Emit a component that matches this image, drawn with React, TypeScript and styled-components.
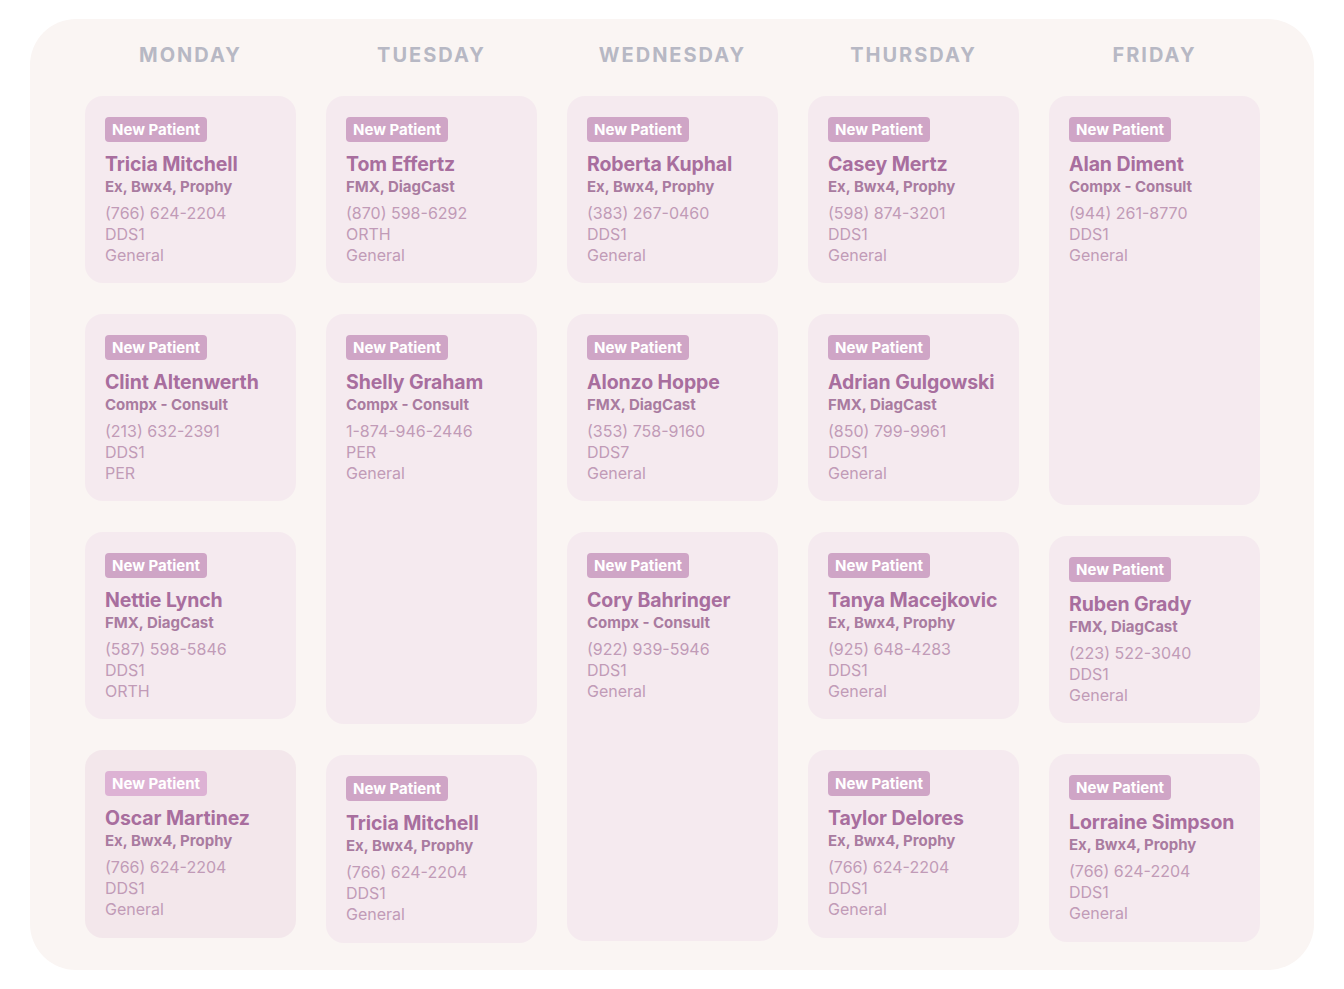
// -- basic library --
import React from 'react';
import styled, { createGlobalStyle } from 'styled-components';

// -- data --
type Appt = {
  name: string;
  proc: string;
  phone: string;
  provider: string;
  kind: string;
  height: number;
  faded?: boolean;
};

type Day = { label: string; appts: Appt[] };

const days: Day[] = [
  {
    label: 'MONDAY',
    appts: [
      { name: 'Tricia Mitchell', proc: 'Ex, Bwx4, Prophy', phone: '(766) 624-2204', provider: 'DDS1', kind: 'General', height: 187 },
      { name: 'Clint Altenwerth', proc: 'Compx - Consult', phone: '(213) 632-2391', provider: 'DDS1', kind: 'PER', height: 187 },
      { name: 'Nettie Lynch', proc: 'FMX, DiagCast', phone: '(587) 598-5846', provider: 'DDS1', kind: 'ORTH', height: 187 },
      { name: 'Oscar Martinez', proc: 'Ex, Bwx4, Prophy', phone: '(766) 624-2204', provider: 'DDS1', kind: 'General', height: 188, faded: true },
    ],
  },
  {
    label: 'TUESDAY',
    appts: [
      { name: 'Tom Effertz', proc: 'FMX, DiagCast', phone: '(870) 598-6292', provider: 'ORTH', kind: 'General', height: 187 },
      { name: 'Shelly Graham', proc: 'Compx - Consult', phone: '1-874-946-2446', provider: 'PER', kind: 'General', height: 410 },
      { name: 'Tricia Mitchell', proc: 'Ex, Bwx4, Prophy', phone: '(766) 624-2204', provider: 'DDS1', kind: 'General', height: 188 },
    ],
  },
  {
    label: 'WEDNESDAY',
    appts: [
      { name: 'Roberta Kuphal', proc: 'Ex, Bwx4, Prophy', phone: '(383) 267-0460', provider: 'DDS1', kind: 'General', height: 187 },
      { name: 'Alonzo Hoppe', proc: 'FMX, DiagCast', phone: '(353) 758-9160', provider: 'DDS7', kind: 'General', height: 187 },
      { name: 'Cory Bahringer', proc: 'Compx - Consult', phone: '(922) 939-5946', provider: 'DDS1', kind: 'General', height: 409 },
    ],
  },
  {
    label: 'THURSDAY',
    appts: [
      { name: 'Casey Mertz', proc: 'Ex, Bwx4, Prophy', phone: '(598) 874-3201', provider: 'DDS1', kind: 'General', height: 187 },
      { name: 'Adrian Gulgowski', proc: 'FMX, DiagCast', phone: '(850) 799-9961', provider: 'DDS1', kind: 'General', height: 187 },
      { name: 'Tanya Macejkovic', proc: 'Ex, Bwx4, Prophy', phone: '(925) 648-4283', provider: 'DDS1', kind: 'General', height: 187 },
      { name: 'Taylor Delores', proc: 'Ex, Bwx4, Prophy', phone: '(766) 624-2204', provider: 'DDS1', kind: 'General', height: 188 },
    ],
  },
  {
    label: 'FRIDAY',
    appts: [
      { name: 'Alan Diment', proc: 'Compx - Consult', phone: '(944) 261-8770', provider: 'DDS1', kind: 'General', height: 409 },
      { name: 'Ruben Grady', proc: 'FMX, DiagCast', phone: '(223) 522-3040', provider: 'DDS1', kind: 'General', height: 187 },
      { name: 'Lorraine Simpson', proc: 'Ex, Bwx4, Prophy', phone: '(766) 624-2204', provider: 'DDS1', kind: 'General', height: 188 },
    ],
  },
];

// -- main component --
const App: React.FC = () => {
  return (
    <>
      <GlobalStyle />
      <Board>
        {days.map((day) => (
          <DayColumn key={day.label}>
            <DayTitle>{day.label}</DayTitle>
            <CardStack>
              {day.appts.map((a, i) => (
                <ApptCard key={i} $height={a.height} $faded={a.faded}>
                  <Badge $faded={a.faded}>New Patient</Badge>
                  <PatientName>{a.name}</PatientName>
                  <Procedure>{a.proc}</Procedure>
                  <Detail>{a.phone}</Detail>
                  <Detail>{a.provider}</Detail>
                  <Detail>{a.kind}</Detail>
                </ApptCard>
              ))}
            </CardStack>
          </DayColumn>
        ))}
      </Board>
    </>
  );
};

// -- styled components --

const GlobalStyle = createGlobalStyle`
  body {
    margin: 0;
    background: #ffffff;
    font-family: Inter, "Noto Sans", sans-serif;
  }
`;

const Board = styled.div`
  margin: 19px 0 0 30px;
  width: 1284px;
  height: 951px;
  box-sizing: border-box;
  padding: 24px 54px 0 55px;
  background: #faf5f3;
  border-radius: 46px;
  display: grid;
  grid-template-columns: repeat(5, 211px);
  column-gap: 30px;
  align-items: start;
`;

const DayColumn = styled.div`
  display: flex;
  flex-direction: column;
`;

const DayTitle = styled.div`
  height: 24px;
  line-height: 24px;
  text-align: center;
  font-size: 20px;
  font-weight: 700;
  letter-spacing: 2px;
  color: #b7b8c4;
  margin-bottom: 29px;
`;

const CardStack = styled.div`
  display: flex;
  flex-direction: column;
  gap: 31px;
`;

const ApptCard = styled.div<{ $height: number; $faded?: boolean }>`
  height: ${(p) => p.$height}px;
  box-sizing: border-box;
  padding: 21px 20px 0 20px;
  border-radius: 18px;
  background: ${(p) => (p.$faded ? '#f3e7eb' : '#f5eaef')};
  display: flex;
  flex-direction: column;
  align-items: flex-start;
`;

const Badge = styled.div<{ $faded?: boolean }>`
  height: 25px;
  line-height: 25px;
  padding: 0 7px;
  border-radius: 4px;
  background: ${(p) => (p.$faded ? '#ddb2d4' : '#cfa5c6')};
  color: #ffffff;
  font-size: 15px;
  font-weight: 700;
  margin-bottom: 10px;
`;

const PatientName = styled.div`
  font-size: 19.5px;
  line-height: 25px;
  font-weight: 700;
  color: #a86e9e;
  letter-spacing: -0.1px;
`;

const Procedure = styled.div`
  font-size: 15px;
  line-height: 20px;
  font-weight: 700;
  color: #a97ba0;
  margin-bottom: 6px;
`;

const Detail = styled.div`
  font-size: 16px;
  line-height: 21px;
  font-weight: 400;
  color: #c19bb7;
`;

// -- finally export part --

export default App;
